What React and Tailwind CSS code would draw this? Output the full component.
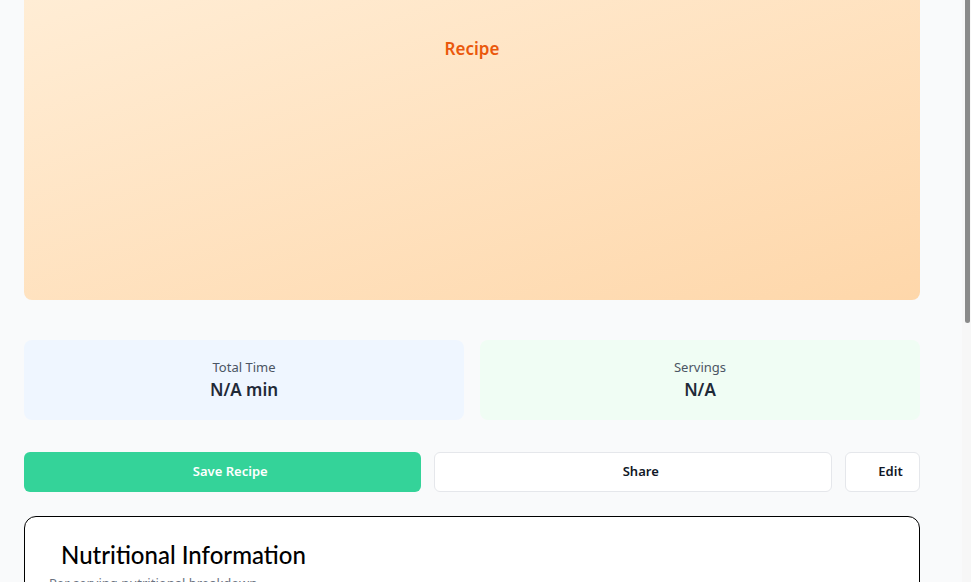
export default function App() {
  return (
    <div
      className="relative min-h-[582px] w-[971px] overflow-hidden bg-[#f9fafb]"
      style={{ fontFamily: '"Noto Sans", "Open Sans", sans-serif' }}
    >
      <div className="w-[944px] px-6">
        <div className="flex h-[300px] justify-center rounded-b-lg bg-gradient-to-br from-[#ffedd5] to-[#fed7aa] pt-[36px]">
          <span className="text-[17px] font-semibold leading-[26px] text-[#ea580c]">Recipe</span>
        </div>

        <div className="mt-10 grid grid-cols-2 gap-4">
          <div className="flex h-[80px] flex-col items-center justify-center rounded-lg bg-[#eff6ff]">
            <span className="text-[13px] leading-[20px] text-[#4b5563]">Total Time</span>
            <span className="text-[17px] font-semibold leading-[26px] text-[#1f2937]">N/A min</span>
          </div>
          <div className="flex h-[80px] flex-col items-center justify-center rounded-lg bg-[#f0fdf4]">
            <span className="text-[13px] leading-[20px] text-[#4b5563]">Servings</span>
            <span className="text-[17px] font-semibold leading-[26px] text-[#1f2937]">N/A</span>
          </div>
        </div>

        <div className="mt-8 flex gap-[13px]">
          <button className="flex h-10 flex-1 items-center justify-center rounded-md bg-[#34d399] pl-4 text-[13px] font-semibold text-white">
            Save Recipe
          </button>
          <button className="flex h-10 flex-1 items-center justify-center rounded-md border border-[#e5e7eb] bg-white pl-4 text-[13px] font-semibold text-[#111827]">
            Share
          </button>
          <button className="flex h-10 w-[75px] items-center justify-center rounded-md border border-[#e5e7eb] bg-white pl-4 text-[13px] font-semibold text-[#111827]">
            Edit
          </button>
        </div>

        <div className="mt-6 h-[200px] rounded-xl border border-black bg-white px-6 pt-[22px]">
          <h2
            className="pl-3 text-[24px] font-medium leading-[32px] text-black"
            style={{ fontFamily: 'Lato, "Noto Sans", sans-serif' }}
          >
            Nutritional Information
          </h2>
          <p className="mt-[2px] text-[13px] leading-[20px] text-[#6b7280]">Per serving nutritional breakdown</p>
        </div>
      </div>

      <div className="absolute right-0 top-0 h-full w-[9px] bg-[#f7f7f7]">
        <div className="ml-[3px] h-[323px] w-[5px] rounded-b-full bg-[#8a8a8a]" />
      </div>
    </div>
  );
}
